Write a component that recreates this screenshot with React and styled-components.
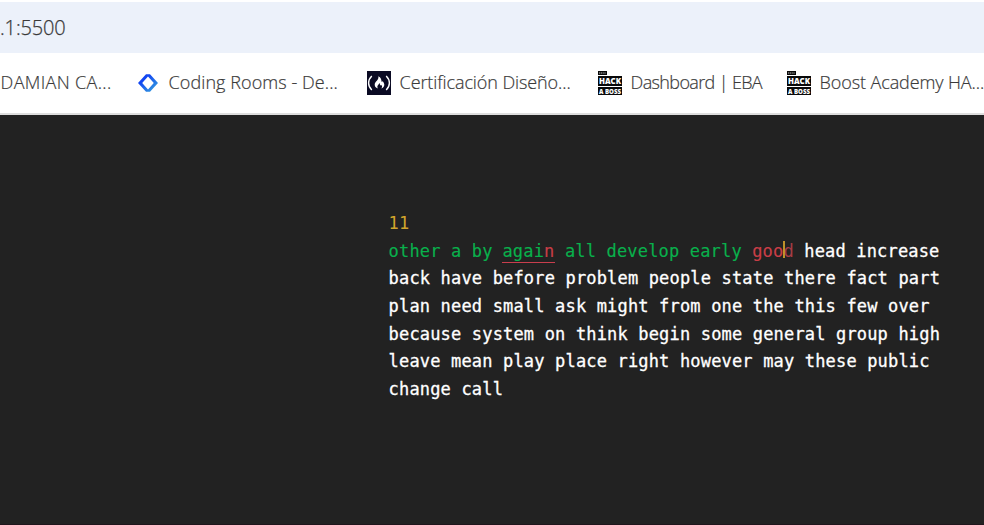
import React from "react";
import styled, { createGlobalStyle } from "styled-components";

const GlobalStyle = createGlobalStyle`
  * { box-sizing: border-box; }
  body { margin: 0; background: #222; overflow: hidden; }
`;

const Window = styled.div`
  display: flex;
  flex-direction: column;
  width: 984px;
  height: 525px;
  overflow: hidden;
  background: #fff;
  font-family: "Open Sans", "Noto Sans", sans-serif;
  font-weight: 300;
  color: #3a3a3a;
`;

const AddressBar = styled.div`
  flex: none;
  height: 51px;
  margin-top: 2px;
  background: #ecf1fa;
  font-size: 20px;
  line-height: 51px;
  letter-spacing: -0.15px;
  -webkit-text-stroke: 0.25px #3a3a3a;
`;

const Bookmarks = styled.nav`
  flex: none;
  display: flex;
  align-items: center;
  height: 62px;
  padding-bottom: 1px;
  border-bottom: 2px solid #dedede;
`;

const Bookmark = styled.div`
  flex: none;
  display: flex;
  align-items: center;
  gap: 8px;
  width: ${(p) => p.$width}px;
  font-size: 18px;
  line-height: 24px;
  letter-spacing: ${(p) => p.$tracking}px;
  white-space: nowrap;

  svg { flex: none; display: block; overflow: visible; }
`;

const Label = styled.span`
  padding: 0 0 2px 0.6px;
  -webkit-text-stroke: 0.2px #3a3a3a;
`;

const Page = styled.main`
  flex: 1;
  padding: 95px 0 0 388.6px;
  background: #222;
  border-bottom: 1px solid #20161c;
  font-family: "DejaVu Sans Mono", monospace;
  font-weight: 400;
  font-size: 17px;
  letter-spacing: 0.17px;
  line-height: 27.67px;
  color: #fff;
`;

const Timer = styled.div`
  color: #d1a52c;
`;

const Line = styled.div`
  white-space: pre;
`;

const Pending = styled.span`
  -webkit-text-stroke: 0.3px #fff;
`;

const Letters = styled.span`
  color: ${(p) => (p.$wrong ? "#c93e47" : "#09b04c")};
  -webkit-text-stroke: 0.15px currentColor;
`;

const MarkedWord = styled.span`
  display: inline-block;
  height: 25px;
  margin-left: -0.6px;
  line-height: 27.67px;
  vertical-align: top;
  border-bottom: 1px solid #c93e4d;
`;

const ActiveLetter = styled.span`
  position: relative;
  color: #a63c45;

  &::before {
    content: "";
    position: absolute;
    left: 0;
    top: 0;
    width: 2px;
    height: 17px;
    background: #bd922a;
  }
`;

const CodingRoomsIcon = () => (
  <svg width="24" height="24" viewBox="0 0 24 24">
    <defs>
      <linearGradient id="rooms" x1="0" y1="0" x2="1" y2="1">
        <stop offset="0.3" stopColor="#1246f2" />
        <stop offset="0.85" stopColor="#3296df" />
      </linearGradient>
    </defs>
    <path
      fill="url(#rooms)"
      fillRule="evenodd"
      d="M10 3.2h4L22 12l-8 8.8h-4L2 12zM12 5.5 6.2 12l5.8 6.5 5.8-6.5z"
    />
  </svg>
);

const CampIcon = () => (
  <svg width="24" height="24" viewBox="0 0 24 24">
    <path fill="#0a0a23" d="M0 0h24v24H0z" />
    <path
      d="M4.8 5Q1.6 8.2 1.6 12t3.2 7M19.2 5q3.2 3.2 3.2 7t-3.2 7"
      fill="none"
      stroke="#fff"
      strokeWidth="1.4"
    />
    <path
      fill="#fff"
      d="M11.3 5.3c2.6 1.2 3 3.3 3.3 5.2.1.8.9.6.8-.6 1.5 1.5 2 3 1.9 4.2-.2 1.8-1.4 2.8-3 3.5 1.3-1.8.9-3-.4-3.8-.1 1-.9.9-.9-.1 0-.8-.2-1.3-.7-1.7-.1 1.4-2 2.1-2 3.8 0 .9.4 1.4 1 1.8-2.1-.5-3.6-1.8-3.6-3.9 0-3.3 4.6-4.4 3.6-8.4z"
    />
  </svg>
);

const HackIcon = () => (
  <svg
    width="24"
    height="24"
    viewBox="0 0 24 24"
    fontFamily="Open Sans, sans-serif"
    fontWeight="800"
    letterSpacing="0"
  >
    <path fill="#090909" d="M0 0h9v4H0zM0 5h24v10H0zM0 16h24v8H0z" />
    <path stroke="#bdbdbd" strokeWidth="1" strokeDasharray="1.2 .6" d="M1 2h7" />
    <text x="1" y="13.2" fontSize="9" fill="#fff" textLength="22" lengthAdjust="spacingAndGlyphs">HACK</text>
    <text x="1" y="22.6" fontSize="7.2" fill="#fff" textLength="22" lengthAdjust="spacingAndGlyphs">A BOSS</text>
  </svg>
);

const bookmarks = [
  { label: "DAMIAN CA...", width: 136, tracking: 0.34 },
  { label: "Coding Rooms - De...", width: 231, tracking: 0.07 },
  { label: "Certificación Diseño...", width: 231, tracking: -0.1 },
  { label: "Dashboard | EBA", width: 189, tracking: -0.63 },
  { label: "Boost Academy HA...", width: 210, tracking: -0.1 },
];

const icons = [null, CodingRoomsIcon, CampIcon, HackIcon, HackIcon];

const remainingLines = [
  "back have before problem people state there fact part",
  "plan need small ask might from one the this few over",
  "because system on think begin some general group high",
  "leave mean play place right however may these public",
  "change call",
];

export default function App() {
  return (
    <Window>
      <GlobalStyle />
      <AddressBar>.1:5500</AddressBar>
      <Bookmarks>
        {bookmarks.map(({ label, width, tracking }, i) => {
          const Icon = icons[i];
          return (
            <Bookmark key={label} $width={width} $tracking={tracking}>
              {Icon && <Icon />}
              <Label>{label}</Label>
            </Bookmark>
          );
        })}
      </Bookmarks>
      <Page>
        <Timer>11</Timer>
        <Line>
          <Letters>other a by </Letters>
          <MarkedWord>
            <Letters>agai</Letters>
            <Letters $wrong>n</Letters>
          </MarkedWord>
          <Letters> all develop early </Letters>
          <Letters $wrong>goo</Letters>
          <ActiveLetter>d</ActiveLetter>
          <Pending> head increase</Pending>
        </Line>
        {remainingLines.map((line) => (
          <Line key={line}>
            <Pending>{line}</Pending>
          </Line>
        ))}
      </Page>
    </Window>
  );
}
